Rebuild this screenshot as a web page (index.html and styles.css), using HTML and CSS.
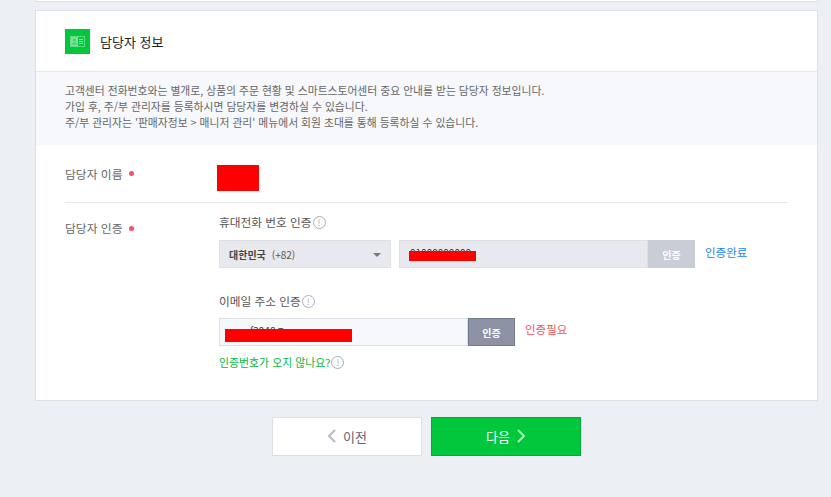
FILE: index.html
```html
<!DOCTYPE html>
<html lang="ko">
<head>
  <meta charset="UTF-8">
  <meta name="viewport" content="width=device-width, initial-scale=1.0">
  <title>담당자 정보</title>
  <link rel="stylesheet" href="styles.css">
</head>
<body>
<div class="prev-card"></div>
<div class="card">
  <div class="card-head">
    <span class="head-icon">
      <svg width="15" height="11" viewBox="0 0 15 11">
        <rect x="0.5" y="0.5" width="14" height="10" fill="none" stroke="#66da89"/>
        <rect x="1" y="1" width="7" height="9" fill="#7fe09c"/>
        <circle cx="4.5" cy="4" r="1.5" fill="#3ad268"/>
        <path d="M2 8.5c0-2.6 5-2.6 5 0z" fill="#3ad268"/>
        <path d="M9 3.5h4M9 5.5h4M9 7.5h4" stroke="#8fe5aa"/>
      </svg>
    </span>
    <h2>담당자 정보</h2>
  </div>
  <div class="notice">
    <p>고객센터 전화번호와는 별개로, 상품의 주문 현황 및 스마트스토어센터 중요 안내를 받는 담당자 정보입니다.</p>
    <p>가입 후, 주/부 관리자를 등록하시면 담당자를 변경하실 수 있습니다.</p>
    <p>주/부 관리자는 '판매자정보 &gt; 매니저 관리' 메뉴에서 회원 초대를 통해 등록하실 수 있습니다.</p>
  </div>
  <div class="form">
    <div class="row row-name">
      <div class="label">담당자 이름 <i class="dot"></i></div>
      <div class="value"><span class="redact redact-name"></span></div>
    </div>
    <div class="row row-auth">
      <div class="label">담당자 인증 <i class="dot"></i></div>
      <div class="value value-auth">
        <div class="sub-label">휴대전화 번호 인증<span class="info">!</span></div>
        <div class="field-row">
          <div class="select"><b>대한민국</b><span>(+82)</span><i class="caret"></i></div>
          <div class="input input-phone">
            <span class="num">01000000000</span>
            <span class="redact redact-phone"></span>
          </div>
          <button class="auth-btn done">인증</button>
          <span class="status blue">인증완료</span>
        </div>
        <div class="sub-label email-label">이메일 주소 인증<span class="info">!</span></div>
        <div class="field-row">
          <div class="input input-email">
            <span class="num">f2948@</span>
            <span class="redact redact-email"></span>
          </div>
          <button class="auth-btn">인증</button>
          <span class="status red">인증필요</span>
        </div>
        <div class="help">인증번호가 오지 않나요?<span class="info">!</span></div>
      </div>
    </div>
  </div>
</div>
<div class="actions">
  <button class="btn btn-prev">
    <svg width="9" height="14" viewBox="0 0 9 14"><path d="M8 1 2 7l6 6" fill="none" stroke="#b4bac6" stroke-width="2"/></svg>
    이전
  </button>
  <button class="btn btn-next">
    다음
    <svg width="9" height="14" viewBox="0 0 9 14"><path d="m1 1 6 6-6 6" fill="none" stroke="#a5ecba" stroke-width="2"/></svg>
  </button>
</div>
</body>
</html>
```

FILE: styles.css
```css
html, body { height: 497px; overflow: hidden; }
body { margin: 0; background: #eceff4; font-family: "Noto Sans CJK KR", "Noto Sans", sans-serif; color: #444; font-size: 11px; }
p { margin: 0; }
button { font-family: inherit; cursor: pointer; }

.prev-card { margin: 0 13px 0 35px; background: #fff; border: 1px solid #dcdfe5; border-top: none; box-sizing: border-box; height: 2px; }
.card { margin: 8px 13px 0 35px; background: #fff; border: 1px solid #dcdfe5; height: 391px; box-sizing: border-box; }

.card-head { display: flex; align-items: center; gap: 10px; height: 60px; padding-left: 29px; border-bottom: 1px solid #e4e7ed; }
.card-head h2 { margin: 0; font-size: 13px; font-weight: 400; color: #222; }
.head-icon { width: 25px; height: 25px; background: #00c73c; display: flex; align-items: center; justify-content: center; }

.notice { height: 73px; padding: 10px 29px 0; box-sizing: border-box; background: #f7f8fc; color: #666; line-height: 16px; font-size: 10.8px; }

.form { padding: 0 29px; }
.row { display: flex; }
.row-name { height: 57px; align-items: center; border-bottom: 1px solid #e4e7ed; }
.row-auth { padding-top: 12px; }
.label { width: 154px; flex: none; color: #666; font-size: 11.8px; line-height: 20px; display: flex; align-items: center; gap: 4px; height: 26px; }
.dot { width: 5px; height: 5px; border-radius: 50%; background: #f5535e; margin-left: 2px; }

.redact { background: #ff0000; display: block; }
.redact-name { width: 42px; height: 26px; margin-left: -2px; margin-top: 8px; }
.redact-phone { position: absolute; left: 9px; top: 10px; width: 67px; height: 10px; }
.redact-email { position: absolute; left: 5px; top: 10px; width: 127px; height: 13px; }

.value { flex: 1; }
.value-auth { margin-top: -2px; }
.sub-label { color: #555; font-size: 11.7px; line-height: 18px; height: 18px; margin-bottom: 9px; display: flex; align-items: center; }
.email-label { margin-top: 24px; margin-bottom: 8px; }
.info { width: 11px; height: 11px; border: 1px solid #a8adb7; border-radius: 50%; color: #a8adb7; font-size: 9px; line-height: 11px; text-align: center; margin-left: 1px; }

.field-row { display: flex; align-items: center; }
.select { width: 172px; height: 28px; box-sizing: border-box; background: #e8e9ee; border: 1px solid #dcdfe5; padding-left: 9px; margin-right: 8px; display: flex; align-items: center; gap: 6px; position: relative; color: #555; font-size: 10px; }
.select b { font-weight: 700; color: #444; }
.caret { position: absolute; right: 9px; top: 12px; border: 4px solid transparent; border-top: 4px solid #777; border-bottom: none; }
.input { height: 28px; box-sizing: border-box; border: 1px solid #dcdfe5; position: relative; color: #333; font-size: 10px; line-height: 24px; }
.num { padding-left: 10px; }
.input-phone { width: 249px; background: #e8e9ee; }
.input-email { width: 249px; background: #f7f8fc; }
.input-email .num { padding-left: 30px; }
.auth-btn { width: 47px; height: 28px; border: 1px solid #727b90; background: #8d93a4; color: #fff; font-size: 10px; font-weight: 700; padding: 0; }
.auth-btn.done { background: #c9cdd6; border-color: #c9cdd6; }
.status { margin-left: 10px; font-size: 11.5px; margin-top: -6px; }
.blue { color: #1b86f3; margin-top: -4px; }
.red { color: #f5535e; }
.help { margin-top: 7px; color: #00b843; font-size: 10.9px; line-height: 18px; display: flex; align-items: center; }

.actions { display: flex; justify-content: center; gap: 9px; margin-top: 16px; padding-left: 22px; }
.btn { width: 150px; height: 39px; font-size: 13px; display: flex; align-items: center; justify-content: center; gap: 7px; padding: 0 0 1px; }
.btn-prev { background: #fff; border: 1px solid #dcdfe5; color: #666; }
.btn-next { background: #00c73c; border: 1px solid #00ad34; color: #fff; }
```
